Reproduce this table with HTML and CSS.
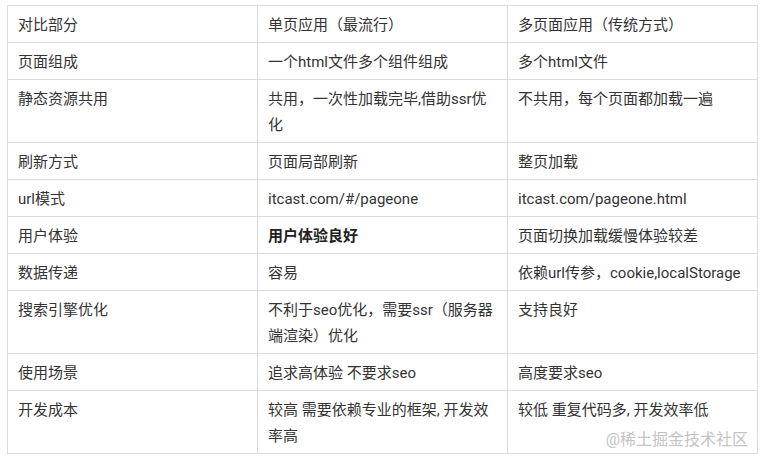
FILE: index.html
```html
<!DOCTYPE html>
<html lang="zh">
<head>
<meta charset="utf-8">
<link rel="stylesheet" href="styles.css">
</head>
<body>
<div class="wrap">
<table class="cmp">
<colgroup><col class="c"><col class="c"><col class="c"></colgroup>
<tr><td>对比部分</td><td>单页应用（最流行）</td><td>多页面应用（传统方式）</td></tr>
<tr><td>页面组成</td><td>一个html文件多个组件组成</td><td>多个html文件</td></tr>
<tr><td>静态资源共用</td><td>共用，一次性加载完毕,借助ssr优化</td><td>不共用，每个页面都加载一遍</td></tr>
<tr><td>刷新方式</td><td>页面局部刷新</td><td>整页加载</td></tr>
<tr><td>url模式</td><td>itcast.com/#/pageone</td><td>itcast.com/pageone.html</td></tr>
<tr><td>用户体验</td><td><strong>用户体验良好</strong></td><td>页面切换加载缓慢体验较差</td></tr>
<tr><td>数据传递</td><td>容易</td><td>依赖url传参，cookie,localStorage</td></tr>
<tr><td>搜索引擎优化</td><td>不利于seo优化，需要ssr（服务器端渲染）优化</td><td>支持良好</td></tr>
<tr><td>使用场景</td><td>追求高体验 不要求seo</td><td>高度要求seo</td></tr>
<tr><td>开发成本</td><td>较高 需要依赖专业的框架, 开发效率高</td><td>较低 重复代码多, 开发效率低</td></tr>
</table>
<div class="mark">@稀土掘金技术社区</div>
</div>
</body>
</html>
```

FILE: styles.css
```css
html, body {
  margin: 0;
  padding: 0;
  background: #fff;
}
body {
  font-family: Roboto, "Noto Sans CJK SC", sans-serif;
  font-size: 15px;
  color: #333;
}
.wrap {
  position: relative;
  width: 750px;
  margin: 5px 0 0 7px;
}
.cmp {
  border-collapse: collapse;
  table-layout: fixed;
  width: 750px;
}
.cmp .c {
  width: 250px;
}
.cmp td {
  border: 1px solid #dcdcdc;
  padding: 6px 9px 4px 10px;
  line-height: 26px;
  vertical-align: top;
  text-align: left;
}
.cmp strong {
  font-weight: 700;
  color: #222;
}
.mark {
  position: absolute;
  right: 9px;
  bottom: 4px;
  font-size: 16px;
  color: #c4c4c4;
}
```
